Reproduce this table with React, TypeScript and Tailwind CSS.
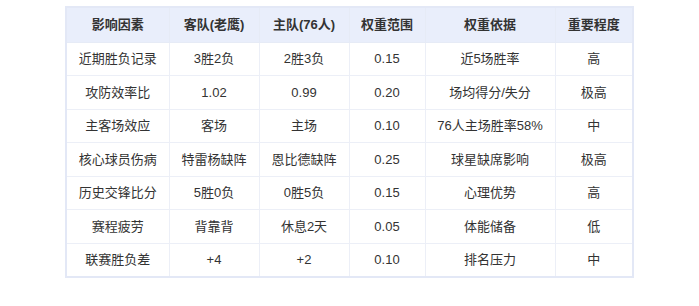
import React from 'react';

const HEADERS = ['影响因素', '客队(老鹰)', '主队(76人)', '权重范围', '权重依据', '重要程度'];

const ROWS = [
  ['近期胜负记录', '3胜2负', '2胜3负', '0.15', '近5场胜率', '高'],
  ['攻防效率比', '1.02', '0.99', '0.20', '场均得分/失分', '极高'],
  ['主客场效应', '客场', '主场', '0.10', '76人主场胜率58%', '中'],
  ['核心球员伤病', '特雷杨缺阵', '恩比德缺阵', '0.25', '球星缺席影响', '极高'],
  ['历史交锋比分', '5胜0负', '0胜5负', '0.15', '心理优势', '高'],
  ['赛程疲劳', '背靠背', '休息2天', '0.05', '体能储备', '低'],
  ['联赛胜负差', '+4', '+2', '0.10', '排名压力', '中'],
];

const COL_WIDTHS = ['w-[103px]', 'w-[90px]', 'w-[90px]', 'w-[76px]', 'w-[130px]', 'w-[78px]'];

export default function App() {
  return (
    <div className="w-[699px] h-[306px] bg-white pt-[6px] font-['Liberation_Sans','Noto_Sans_CJK_SC',sans-serif]">
      <table className="mx-auto w-[567px] table-fixed border-collapse border-2 border-[#e3e8f6] text-[13px] text-[#333]">
        <colgroup>
          {COL_WIDTHS.map((w, i) => (
            <col key={i} className={w} />
          ))}
        </colgroup>
        <thead>
          <tr className="h-[35px] bg-[#e9eefb]">
            {HEADERS.map((h) => (
              <th key={h} className="border border-[#e6ebf6] px-2 text-center font-bold text-[#333]">
                {h}
              </th>
            ))}
          </tr>
        </thead>
        <tbody>
          {ROWS.map((row, i) => (
            <tr key={i} className="h-[33.6px]">
              {row.map((cell, j) => (
                <td key={j} className="border border-[#eceff7] px-2 text-center">
                  {cell}
                </td>
              ))}
            </tr>
          ))}
        </tbody>
      </table>
    </div>
  );
}
